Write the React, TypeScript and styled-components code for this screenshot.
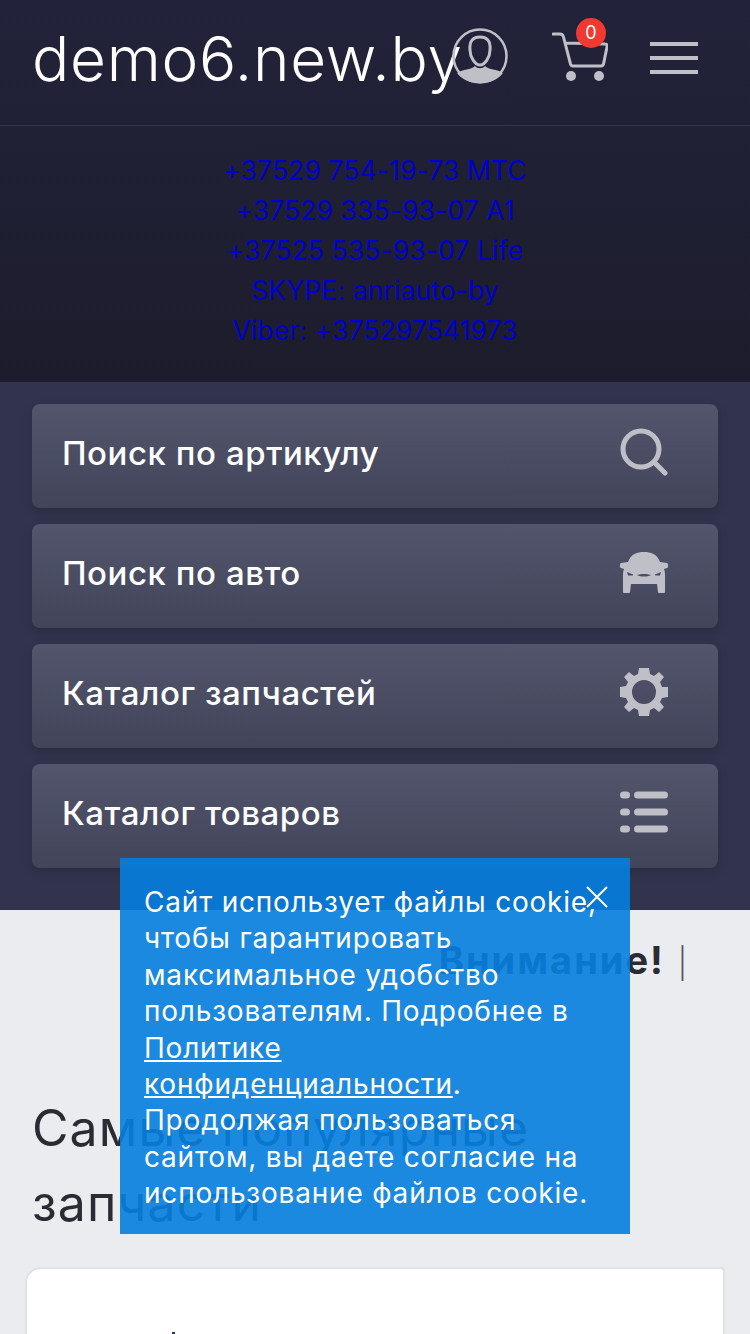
import React from 'react';
import styled, { createGlobalStyle } from 'styled-components';

const ICON_COLOR = '#bfc0c7';
const FONT = '"Inter", "Noto Sans", sans-serif';

const GlobalStyle = createGlobalStyle`
  html, body {
    margin: 0;
    padding: 0;
  }
  body {
    background: #ebecf0;
    font-family: ${FONT};
    color: #2b2b33;
  }
  * {
    box-sizing: border-box;
  }
`;

const Page = styled.div`
  width: 750px;
  height: 1334px;
  position: relative;
  overflow: hidden;
`;

const TopBlock = styled.div`
  height: 382px;
  background: linear-gradient(#22233a, #1c1c2c);
`;

const Header = styled.header`
  height: 126px;
  padding: 28px 52px 0 32px;
  display: flex;
  align-items: flex-start;
  border-bottom: 1px solid #36374f;
`;

const Logo = styled.a`
  width: 420px;
  flex: none;
  font-size: 62px;
  font-weight: 300;
  line-height: 62px;
  letter-spacing: 0.7px;
  color: #fff;
  white-space: nowrap;
`;

const UserIcon = styled.svg`
  width: 56px;
  height: 56px;
  flex: none;
  display: block;
  position: relative;
`;

const CartWrap = styled.div`
  width: 56px;
  height: 50px;
  flex: none;
  margin: 4px 0 0 44px;
  position: relative;
`;

const CartBadge = styled.span`
  position: absolute;
  top: -14px;
  left: 24px;
  width: 30px;
  height: 30px;
  border-radius: 50%;
  background: #ef3a32;
  color: #fff;
  font-size: 18px;
  line-height: 30px;
  text-align: center;
`;

const Burger = styled.div`
  width: 48px;
  flex: none;
  margin: 14px 0 0 42px;
  display: flex;
  flex-direction: column;
  gap: 10px;
`;

const BurgerBar = styled.span`
  height: 4px;
  background: ${ICON_COLOR};
`;

const Contacts = styled.div`
  padding-top: 24px;
  text-align: center;
  font-size: 26.5px;
  font-weight: 400;
  line-height: 40px;
  color: #0000cc;
`;

const ContactLine = styled.a`
  display: block;
  letter-spacing: 0.1px;
`;

const MenuBlock = styled.nav`
  height: 528px;
  padding: 22px 32px 0;
  background: #32344d;
  display: flex;
  flex-direction: column;
  gap: 16px;
`;

const MenuButton = styled.a`
  height: 104px;
  flex: none;
  padding: 0 50px 0 30px;
  display: flex;
  align-items: center;
  justify-content: space-between;
  border-radius: 8px;
  background: linear-gradient(#52556b, #42445a);
  box-shadow: 0 4px 10px rgba(20, 20, 40, 0.25);
  color: #fff;
  font-size: 33px;
  font-weight: 500;
  letter-spacing: 0.55px;
`;

const MenuLabel = styled.span`
  padding-bottom: 7px;
`;

const MenuIcon = styled.svg`
  width: 48px;
  height: 48px;
  flex: none;
  display: block;
  margin-bottom: 8px;
`;

const Main = styled.main`
  padding: 0 25px;
`;

const Notice = styled.p`
  margin: 0;
  height: 181px;
  padding: 28px 36px 0 0;
  text-align: right;
  font-size: 38px;
  line-height: 44px;
  letter-spacing: 2px;
`;

const Strong = styled.b`
  font-weight: 700;
`;

const NoticeBar = styled.span`
  font-size: 30px;
  font-weight: 300;
  color: #55555c;
`;

const Heading = styled.h2`
  margin: 0 0 26px;
  padding-left: 7px;
  font-size: 50px;
  font-weight: 400;
  line-height: 75px;
  letter-spacing: 1.1px;
`;

const Card = styled.section`
  height: 200px;
  padding: 63px 0 0 145px;
  background: #fff;
  border: 2px solid #e0e1e4;
  border-bottom: 0;
  border-radius: 16px 4px 0 0;
`;

const CardMark = styled.span`
  display: block;
  width: 3px;
  height: 3px;
  background: #1e3a6a;
`;

const CookieBox = styled.div`
  position: absolute;
  left: 120px;
  top: 858px;
  width: 510px;
  padding: 26px 24px 22px;
  background: rgba(6, 126, 222, 0.91);
  color: #fff;
  font-size: 28px;
  line-height: 36.4px;
  letter-spacing: 0.8px;
`;

const CookieLink = styled.a`
  color: #fff;
  text-decoration: underline;
`;

const CookieClose = styled.svg`
  position: absolute;
  top: 28px;
  right: 22px;
  width: 22px;
  height: 22px;
`;

const Icons = {
  search: (
    <>
      <circle cx="21" cy="21" r="18" fill="none" stroke={ICON_COLOR} strokeWidth="5" />
      <path d="M34 34 L45 45" stroke={ICON_COLOR} strokeWidth="5" strokeLinecap="round" />
    </>
  ),
  car: (
    <path
      fillRule="evenodd"
      fill={ICON_COLOR}
      d="M24 4 C17 4 11 6 8 14 L1 15 Q0 15 0 17 L0 19 Q0 20 1 20 L4 21 Q3 23 3 26 L3 44 Q3 45 4 45 L9 45 Q10 45 10 44 L11 36 L37 36 L38 44 Q38 45 39 45 L44 45 Q45 45 45 44 L45 26 Q45 23 44 21 L47 20 Q48 20 48 19 L48 17 Q48 15 47 15 L40 14 C37 6 31 4 24 4 Z M7 24 L8 27.5 L13 27.5 L13 26.5 Z M41 24 L35 26.5 L35 27.5 L40 27.5 Z M17 27 C21 25.5 27 25.5 31 27 C27 29 21 29 17 27 Z"
    />
  ),
  gear: (
    <path
      fillRule="evenodd"
      fill={ICON_COLOR}
      d="M19 0 L29 0 L30 6 L34 8 L39 4 L44 9 L40 14 L42 19 L48 19 L48 29 L42 30 L40 34 L44 39 L39 44 L34 40 L30 42 L29 48 L19 48 L18 42 L14 40 L9 44 L4 39 L8 34 L6 30 L0 29 L0 19 L6 18 L8 14 L4 9 L9 4 L14 8 L18 6 Z M24 12 A12 12 0 1 0 24 36 A12 12 0 1 0 24 12 Z"
    />
  ),
  list: (
    <>
      {[7, 24, 41].map((y) => (
        <React.Fragment key={y}>
          <rect x="0" y={y - 3.5} width="10" height="7" rx="3.5" fill={ICON_COLOR} />
          <rect x="14" y={y - 3.5} width="34" height="7" rx="3.5" fill={ICON_COLOR} />
        </React.Fragment>
      ))}
    </>
  ),
};

const MENU: { label: string; icon: keyof typeof Icons }[] = [
  { label: 'Поиск по артикулу', icon: 'search' },
  { label: 'Поиск по авто', icon: 'car' },
  { label: 'Каталог запчастей', icon: 'gear' },
  { label: 'Каталог товаров', icon: 'list' },
];

const CONTACTS = [
  '+37529 754-19-73 МТС',
  '+37529 335-93-07 A1',
  '+37525 535-93-07 Life',
  'SKYPE: anriauto-by',
  'Viber: +375297541973',
];

const App: React.FC = () => (
  <Page>
    <GlobalStyle />
    <TopBlock>
      <Header>
        <Logo>demo6.new.by</Logo>
        <UserIcon viewBox="0 0 56 56">
          <circle cx="28" cy="28" r="26.5" fill="none" stroke={ICON_COLOR} strokeWidth="2.5" />
          <path
            d="M18 22 C17 12 22 9 28 9 C34 9 39 12 38 22 C38 29 33 37 28 37 C23 37 18 29 18 22 Z"
            fill="none"
            stroke={ICON_COLOR}
            strokeWidth="3"
          />
          <path
            d="M5 45 C11 41 19 42 23 38 C25 41 31 41 33 38 C37 42 45 41 51 45 C46 52 37 55 28 55 C19 55 10 52 5 45 Z"
            fill={ICON_COLOR}
          />
        </UserIcon>
        <CartWrap>
          <svg width="56" height="50" viewBox="0 0 56 50" fill="none">
            <path
              d="M1 2 L8 2 C10 2 11 3 11.5 5 L18.5 32 C19 33.5 20 34 21 34 L49 34 C50 34 51 33.5 51.5 32 L55 15 C55.5 13 54.5 12 53 12 L13 11"
              stroke={ICON_COLOR}
              strokeWidth="3"
              strokeLinecap="round"
            />
            <circle cx="19" cy="44" r="5" fill={ICON_COLOR} />
            <circle cx="47" cy="44" r="5" fill={ICON_COLOR} />
          </svg>
          <CartBadge>0</CartBadge>
        </CartWrap>
        <Burger>
          <BurgerBar />
          <BurgerBar />
          <BurgerBar />
        </Burger>
      </Header>
      <Contacts>
        {CONTACTS.map((line) => (
          <ContactLine key={line}>{line}</ContactLine>
        ))}
      </Contacts>
    </TopBlock>
    <MenuBlock>
      {MENU.map(({ label, icon }) => (
        <MenuButton key={label}>
          <MenuLabel>{label}</MenuLabel>
          <MenuIcon viewBox="0 0 48 48">{Icons[icon]}</MenuIcon>
        </MenuButton>
      ))}
    </MenuBlock>
    <Main>
      <Notice>
        <Strong>Внимание!</Strong> <NoticeBar>|</NoticeBar>
      </Notice>
      <Heading>Самые популярные запчасти</Heading>
      <Card>
        <CardMark />
      </Card>
    </Main>
    <CookieBox>
      Сайт использует файлы cookie, чтобы гарантировать максимальное удобство пользователям.
      Подробнее в <CookieLink>Политике<br />конфиденциальности</CookieLink>. Продолжая пользоваться
      сайтом, вы даете согласие на использование файлов cookie.
      <CookieClose viewBox="0 0 22 22">
        <path d="M1 1 L21 21 M21 1 L1 21" stroke="#fff" strokeWidth="2" />
      </CookieClose>
    </CookieBox>
  </Page>
);

export default App;
